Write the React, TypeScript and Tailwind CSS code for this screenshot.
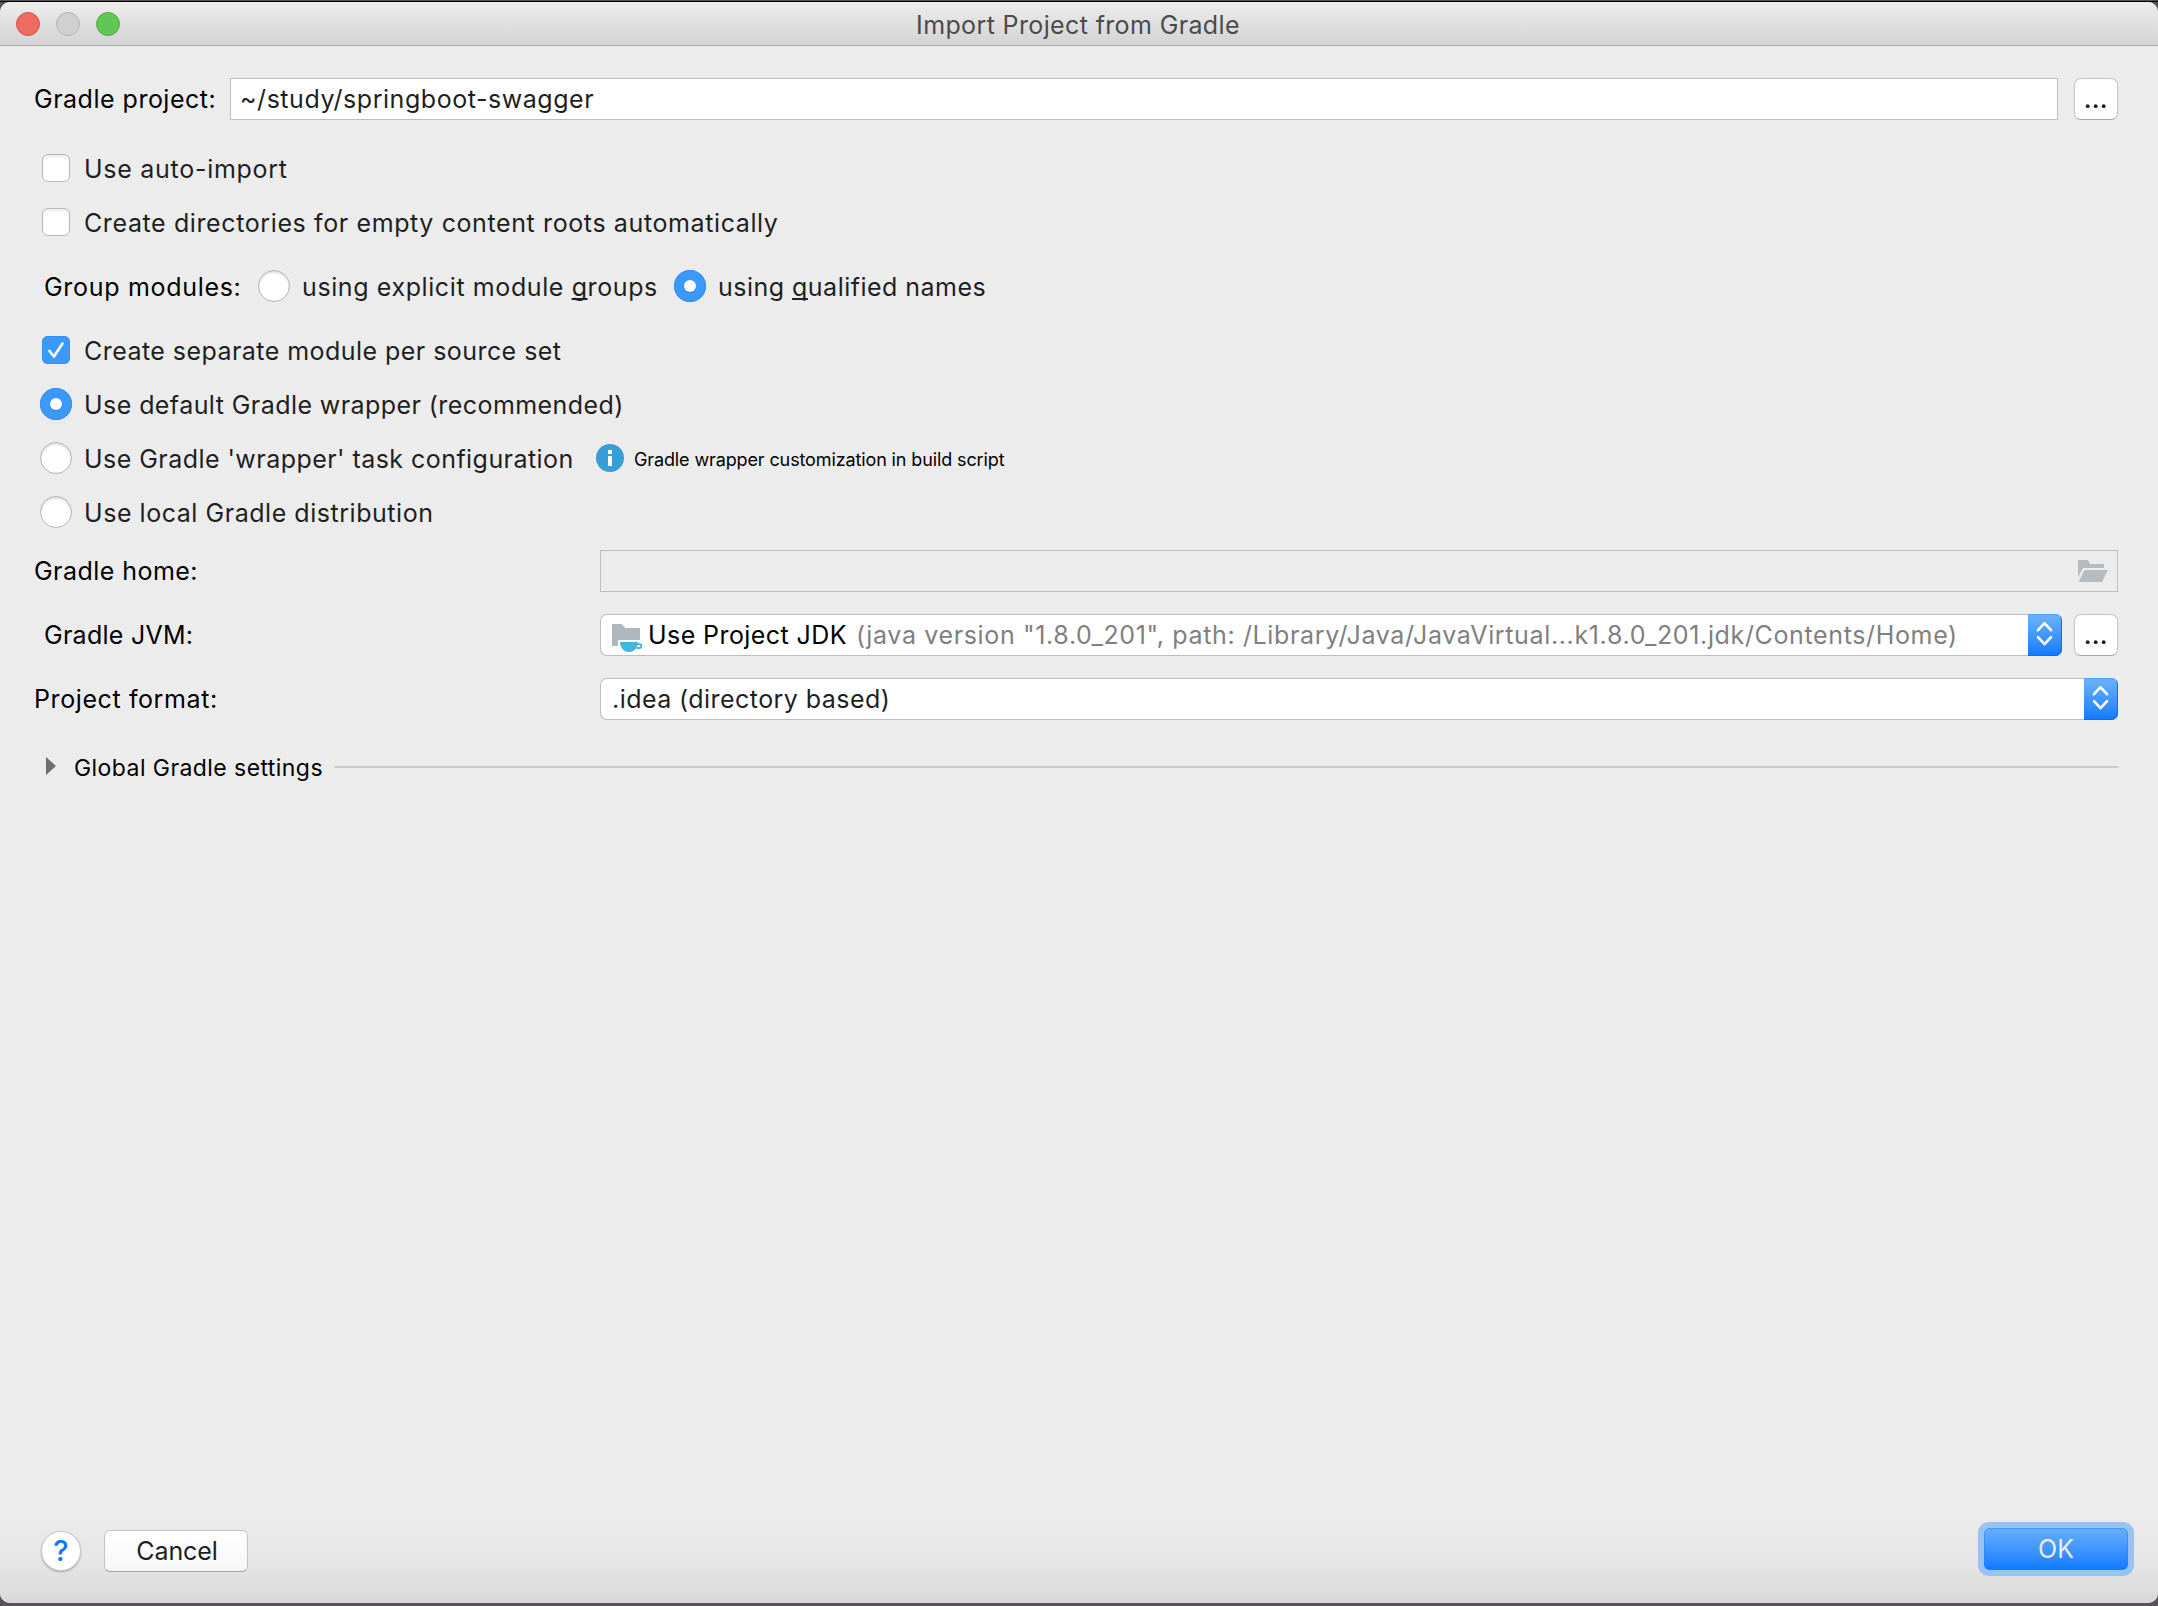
import React, { useState } from 'react';
import clsx from 'clsx';

const Check = ({ checked }: { checked: boolean }) => (
    <span
        className={clsx(
            'flex h-7 w-7 shrink-0 items-center justify-center rounded-[6px]',
            checked
                ? 'bg-[#3b99fc] shadow-[inset_0_0_0_1px_#3690f2]'
                : 'border border-[#b9b9b9] bg-white shadow-[inset_0_2px_2px_rgba(0,0,0,0.08)]'
        )}
    >
        {checked && (
            <svg width="28" height="28" viewBox="0 0 28 28" fill="none">
                <path d="M7.5 15 L12 20.5 L20.5 7.5" stroke="#fff" strokeWidth="2.6" strokeLinecap="round" strokeLinejoin="round" />
            </svg>
        )}
    </span>
);

const Radio = ({ checked }: { checked: boolean }) => (
    <span
        className={clsx(
            'flex h-8 w-8 shrink-0 items-center justify-center rounded-full',
            checked
                ? 'bg-[#3b99fc] shadow-[inset_0_0_0_1px_#3690f2]'
                : 'border border-[#b5b5b5] bg-white shadow-[inset_0_2px_2px_rgba(0,0,0,0.12)]'
        )}
    >
        {checked && <span className="h-3 w-3 rounded-full bg-white shadow-[0_1px_1px_rgba(0,0,0,0.2)]" />}
    </span>
);

const Stepper = () => (
    <span className="flex h-[42px] w-[34px] shrink-0 items-center justify-center rounded-r-[7px] bg-linear-to-b from-[#6cb3fa] to-[#0a7aff] shadow-[inset_-1px_-1px_0_#0f6ef0,inset_0_1px_0_#4a9ffb]">
        <svg width="34" height="42" viewBox="0 0 34 42" fill="none" stroke="#fff" strokeWidth="2.6" strokeLinecap="round" strokeLinejoin="round">
            <path d="M10 16.2 L16.5 9.2 L23 16.2" />
            <path d="M10 23.2 L16.5 30.2 L23 23.2" />
        </svg>
    </span>
);

const MoreButton = () => (
    <button className="flex h-[42px] w-11 shrink-0 items-center justify-center rounded-[7px] border border-[#c3c3c3] border-b-[#a9a9a9] bg-white">
        <svg width="42" height="40" viewBox="0 0 42 40" fill="#1f1f1f">
            <circle cx="12.7" cy="27.2" r="1.9" />
            <circle cx="20.7" cy="27.2" r="1.9" />
            <circle cx="28.7" cy="27.2" r="1.9" />
        </svg>
    </button>
);

const DISTRIBUTIONS = [
    { id: 'default', label: 'Use default Gradle wrapper (recommended)', className: 'tracking-[0.43px]' },
    { id: 'task', label: "Use Gradle 'wrapper' task configuration", className: 'tracking-[0.45px]', hint: 'Gradle wrapper customization in build script' },
    { id: 'local', label: 'Use local Gradle distribution', className: 'tracking-[0.54px]' },
];

export default function App() {
    const [autoImport, setAutoImport] = useState(false);
    const [createDirs, setCreateDirs] = useState(false);
    const [separateModule, setSeparateModule] = useState(true);
    const [grouping, setGrouping] = useState('qualified');
    const [distribution, setDistribution] = useState('default');

    return (
        <div className="h-[1606px] w-[2158px] overflow-hidden bg-[#555355] font-['Inter',sans-serif] text-[25px] leading-[30px] text-[#1f1f1f]">
            {/* Strip of desktop above the window */}
            <div className="h-[2px] border-b border-black bg-[#5b4d54]" />

            <div className="flex h-[1601px] flex-col overflow-hidden rounded-[10px] bg-[#ececec]">
                {/* Title bar */}
                <div className="flex h-11 shrink-0 items-center border-b border-[#adadad] bg-linear-to-b from-[#ededed] to-[#d3d3d3] pl-4">
                    <div className="flex w-[200px] gap-4">
                        <span className="h-6 w-6 rounded-full border border-[#dd5147] bg-[#ed6b60]" />
                        <span className="h-6 w-6 rounded-full border border-[#b3b3b3] bg-[#d0d0d0]" />
                        <span className="h-6 w-6 rounded-full border border-[#4fae3e] bg-[#62c655]" />
                    </div>
                    <div className="flex-1 pt-[3px] pr-[218px] text-center tracking-[0.37px] text-[#4b4b4b]">Import Project from Gradle</div>
                </div>

                <div className="flex flex-col pt-8 pr-10 pl-[34px]">
                    <div className="flex h-[42px] items-center text-black">
                        <span className="w-[196px] tracking-[0.5px]">Gradle project:</span>
                        <div className="flex h-[42px] flex-1 items-center border border-[#bdbdbd] bg-white pl-[9px] tracking-[0.54px] text-[#1f1f1f]">
                            ~/study/springboot-swagger
                        </div>
                        <div className="ml-4">
                            <MoreButton />
                        </div>
                    </div>

                    <div className="mt-[34px] flex h-7 items-center gap-[14px] pl-2" onClick={() => setAutoImport(!autoImport)}>
                        <Check checked={autoImport} />
                        <span className="pt-[2px] tracking-[0.72px]">Use auto-import</span>
                    </div>
                    <div className="mt-[26px] flex h-7 items-center gap-[14px] pl-2" onClick={() => setCreateDirs(!createDirs)}>
                        <Check checked={createDirs} />
                        <span className="pt-[2px] tracking-[0.61px]">Create directories for empty content roots automatically</span>
                    </div>

                    <div className="mt-[34px] flex h-8 items-center pl-[10px]">
                        <span className="w-[214px] pt-[2px] tracking-[0.69px] text-black">Group modules:</span>
                        <div className="flex w-[416px] items-center gap-3" onClick={() => setGrouping('explicit')}>
                            <Radio checked={grouping === 'explicit'} />
                            <span className="pt-[2px] tracking-[0.6px]">
                                using explicit module <span className="underline decoration-2 underline-offset-2 [text-decoration-skip-ink:none]">g</span>roups
                            </span>
                        </div>
                        <div className="flex items-center gap-3" onClick={() => setGrouping('qualified')}>
                            <Radio checked={grouping === 'qualified'} />
                            <span className="pt-[2px] tracking-[0.48px]">
                                using <span className="underline decoration-2 underline-offset-2 [text-decoration-skip-ink:none]">q</span>ualified names
                            </span>
                        </div>
                    </div>

                    <div className="mt-[34px] flex h-7 items-center gap-[14px] pl-2" onClick={() => setSeparateModule(!separateModule)}>
                        <Check checked={separateModule} />
                        <span className="pt-[2px] tracking-[0.45px]">Create separate module per source set</span>
                    </div>

                    {/* Gradle distribution */}
                    <div className="mt-6 flex flex-col gap-[22px]">
                        {DISTRIBUTIONS.map(item => (
                            <div key={item.id} className="flex h-8 items-center pl-[6px]" onClick={() => setDistribution(item.id)}>
                                <Radio checked={distribution === item.id} />
                                <span className={clsx('ml-3 pt-[2px]', item.className, item.hint && 'w-[512px]')}>{item.label}</span>
                                {item.hint && (
                                    <>
                                        <svg width="28" height="28" viewBox="0 0 28 28">
                                            <circle cx="14" cy="14" r="14" fill="#389fd6" />
                                            <path d="M12 6h4v4h-4zM12 12h4v10h-4z" fill="#fff" />
                                        </svg>
                                        <span className="ml-[10px] pt-[3px] text-[18px] tracking-[-0.12px] text-black">{item.hint}</span>
                                    </>
                                )}
                            </div>
                        ))}
                    </div>

                    <div className="mt-[22px] flex h-[42px] items-center text-black">
                        <span className="w-[566px] tracking-[0.45px]">Gradle home:</span>
                        <div className="flex h-[42px] flex-1 items-center justify-end border border-[#bdbdbd] pr-[9px]">
                            <svg width="30" height="22" viewBox="0 0 30 22" fill="#b5bcc1">
                                <path d="M0 0h10l2 4h14v4H5L0 17z" />
                                <path d="M6.5 10H30l-6 12H0.5z" />
                            </svg>
                        </div>
                    </div>

                    <div className="mt-[22px] flex h-[42px] items-center text-black">
                        <span className="w-[566px] pl-[10px] tracking-[0.27px]">Gradle JVM:</span>
                        <div className="flex h-[42px] flex-1 items-center rounded-[7px] border border-r-0 border-[#bdbdbd] bg-white pl-[11px]">
                            {/* Folder with the Java cup */}
                            <svg width="32" height="34" viewBox="0 0 32 34">
                                <path d="M0 6h9.500l4 4H28v18H0z" fill="#adb8bf" />
                                <path d="M6 22h22v6H6z" fill="#fff" />
                                <path d="M8 24h18c0 5-3.500 10-9 10s-9-5-9-10z" fill="#40b6e0" />
                                <path d="M25 26.200h2.500a1.800 1.800 0 0 1 0 3.800H24.500" fill="none" stroke="#40b6e0" strokeWidth="2" />
                            </svg>
                            <span className="ml-1 tracking-[0.42px]">Use Project JDK</span>
                            <span className="ml-[9px] flex-1 tracking-[0.64px] whitespace-nowrap text-[#808080]">
                                (java version "1.8.0_201", path: /Library/Java/JavaVirtual...k1.8.0_201.jdk/Contents/Home)
                            </span>
                            <Stepper />
                        </div>
                        <div className="ml-3">
                            <MoreButton />
                        </div>
                    </div>

                    <div className="mt-[22px] flex h-[42px] items-center text-black">
                        <span className="w-[566px] tracking-[0.6px]">Project format:</span>
                        <div className="flex h-[42px] flex-1 items-center rounded-[7px] border border-r-0 border-[#bdbdbd] bg-white pl-[11px] text-[#1f1f1f]">
                            <span className="flex-1 tracking-[0.44px]">.idea (directory based)</span>
                            <Stepper />
                        </div>
                    </div>

                    <div className="mt-8 flex h-[30px] items-center pl-3 text-black">
                        <svg width="10" height="18" viewBox="0 0 10 18" className="mb-[2px]">
                            <path d="M0 0L10 9L0 18z" fill="#6e6e6e" />
                        </svg>
                        <span className="ml-[18px] w-[260px] pt-[2px] text-[23px] tracking-[0.43px]">Global Gradle settings</span>
                        <span className="h-[2px] flex-1 bg-[#cbcbcb]" />
                    </div>
                </div>

                {/* Dialog buttons */}
                <div className="mt-auto flex h-[93px] shrink-0 items-start bg-linear-to-b from-[#ececec] via-[#e7e7e7] to-[#d9d9d9] pr-6 pl-[41px]">
                    <button className="mt-[21px] flex h-10 w-10 items-center justify-center rounded-full border border-[#c8c8c8] bg-white text-[29px] font-medium text-[#0a7aff] shadow-[0_1px_2px_rgba(0,0,0,0.25)]">
                        ?
                    </button>
                    <button className="mt-5 ml-[23px] h-[42px] w-36 rounded-[6px] border border-[#c3c3c3] border-b-[#a5a5a5] bg-linear-to-b from-white to-[#f6f6f6] pl-[2px] tracking-[-0.1px]">
                        Cancel
                    </button>
                    <button className="mt-3 ml-auto h-[54px] w-[156px] rounded-[11px] bg-[#97c2f1] p-[6px] text-[#ececec]">
                        <span className="flex h-[42px] items-center justify-center rounded-[6px] bg-linear-to-b from-[#66b0fb] to-[#0a7aff] shadow-[inset_0_0_0_1px_rgba(30,125,250,0.5)]">
                            OK
                        </span>
                    </button>
                </div>
            </div>
        </div>
    );
}
